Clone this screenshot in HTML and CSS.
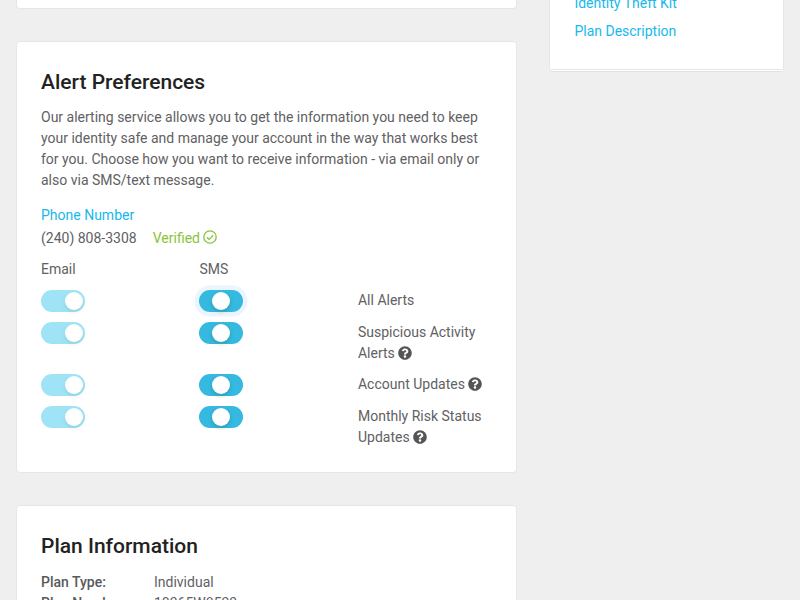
FILE: index.html
```html
<!DOCTYPE html>
<html lang="en">
<head>
<meta charset="utf-8">
<title>Account Settings</title>
<link rel="stylesheet" href="styles.css">
</head>
<body>
<svg class="sprite" aria-hidden="true">
  <symbol id="help" viewBox="0 0 512 512"><path d="M504 256c0 136.997-111.043 248-248 248S8 392.997 8 256C8 119.083 119.043 8 256 8s248 111.083 248 248zM262.655 90c-54.497 0-89.255 22.957-116.549 63.758-3.536 5.286-2.353 12.415 2.715 16.258l34.699 26.31c5.205 3.947 12.621 3.008 16.665-2.122 17.864-22.658 30.113-35.797 57.303-35.797 20.429 0 45.698 13.148 45.698 32.958 0 14.976-12.363 22.667-32.534 33.976C247.128 238.528 216 254.941 216 296v4c0 6.627 5.373 12 12 12h56c6.627 0 12-5.373 12-12v-1.333c0-28.462 83.186-29.647 83.186-106.667 0-58.002-60.165-102-116.531-102zM256 338c-25.365 0-46 20.635-46 46 0 25.364 20.635 46 46 46s46-20.636 46-46c0-25.365-20.635-46-46-46z" fill="currentColor"/></symbol>
</svg>
<div class="page">
  <main class="main">
    <section class="card card-previous"></section>
    <section class="card card-alerts">
      <h2>Alert Preferences</h2>
      <p class="intro">Our alerting service allows you to get the information you need to keep your identity safe and manage your account in the way that works best for you. Choose how you want to receive information - via email only or also via SMS/text message.</p>
      <a class="link phone-link">Phone Number</a>
      <div class="phone"><span>(240) 808-3308</span><span class="verified">Verified <svg class="icon" viewBox="0 0 14 14"><circle cx="7" cy="7" r="6.2" fill="none" stroke="currentColor" stroke-width="1.3"/><path d="M3.9 7.3 6.1 9.4 10.2 5.2" fill="none" stroke="currentColor" stroke-width="1.3"/></svg></span></div>
      <div class="row row-head"><span>Email</span><span>SMS</span></div>
      <div class="row"><span class="switch locked"></span><span class="switch focused"></span><span class="label">All Alerts</span></div>
      <div class="row"><span class="switch locked"></span><span class="switch"></span><span class="label">Suspicious Activity Alerts <svg class="icon help"><use href="#help"/></svg></span></div>
      <div class="row"><span class="switch locked"></span><span class="switch"></span><span class="label">Account Updates <svg class="icon help"><use href="#help"/></svg></span></div>
      <div class="row"><span class="switch locked"></span><span class="switch"></span><span class="label">Monthly Risk Status Updates <svg class="icon help"><use href="#help"/></svg></span></div>
    </section>
    <section class="card card-plan">
      <h2>Plan Information</h2>
      <dl class="plan">
        <dt>Plan Type:</dt><dd>Individual</dd>
        <dt>Plan Number:</dt><dd>10365W8533</dd>
      </dl>
    </section>
  </main>
  <aside class="side">
    <div class="side-card">
      <a class="link">Identity Theft Kit</a>
      <a class="link">Plan Description</a>
    </div>
    <div class="side-edge"></div>
  </aside>
</div>
</body>
</html>
```
FILE: styles.css
```css
* { box-sizing: border-box; }
html, body { height: 100%; }
body {
  margin: 0;
  overflow: hidden;
  background: #efefef;
  color: #616163;
  font: 400 14px/21px Roboto, sans-serif;
}
.sprite { display: none; }
.page {
  display: flex;
  align-items: flex-start;
  gap: 32px;
  height: 600px;
  padding: 0 16px;
  overflow: hidden;
}
.main { flex: none; width: 501px; }
.card {
  margin-bottom: 32px;
  padding: 25px 24px 24px;
  background: #fff;
  border: 1px solid #e6e6e6;
  border-radius: 4px;
}
.card-previous {
  height: 9px;
  padding: 0;
  border-top: 0;
  border-radius: 0 0 4px 4px;
}
.card-alerts { height: 432px; }
.card-plan { height: 150px; }
h2 {
  margin: 0 0 9px;
  color: #222;
  font-size: 21px;
  font-weight: 500;
  line-height: 31px;
}
.intro { width: 441px; margin: 0 0 14px; }
.link { display: block; color: #17b9ea; }
.phone {
  display: flex;
  gap: 16px;
  margin-top: 2px;
}
.verified { color: #88c43a; }
.icon {
  width: 14px;
  height: 14px;
  vertical-align: -1px;
}
.help { color: #555; vertical-align: -2px; }
.row {
  display: grid;
  grid-template-columns: 158.4px 158.6px 134px;
  margin-bottom: 10px;
}
.row-head { margin: 10px 0; }
.row:not(.row-head) { min-height: 22px; }
.switch {
  display: flex;
  align-items: center;
  width: 44px;
  height: 22px;
  padding-left: 12.4px;
  border-radius: 11px;
  background: #36b9e0;
}
.switch::after {
  content: "";
  width: 18px;
  height: 18px;
  border-radius: 9px;
  background: #fff;
  box-shadow: 0 2px 4px rgba(0, 35, 11, .2);
}
.focused { box-shadow: 0 0 0 4.5px #ebf5fe; }
.locked { padding-left: 24px; background: #9fe4f6; }
.locked::after { box-shadow: 0 2px 4px rgba(0, 35, 11, .1); }
.plan {
  display: grid;
  grid-template-columns: 113px 1fr;
  margin: 10px 0 0;
}
dt { color: #58595b; font-weight: 500; }
dd { margin: 0; }
.side { width: 235px; }
.side-card {
  display: flow-root;
  height: 70px;
  padding: 0 24.4px;
  background: #fff;
  border: 1px solid #e6e6e6;
  border-top: 0;
  border-radius: 0 0 2px 2px;
}
.side-card .link { margin-bottom: 7px; }
.side-card .link:first-child { margin-top: -7px; }
.side-edge {
  height: 2px;
  margin: 0 1px;
  background: #fff;
  border-bottom: 1px solid #e2e2e2;
  border-radius: 0 0 4px 4px;
}
```
